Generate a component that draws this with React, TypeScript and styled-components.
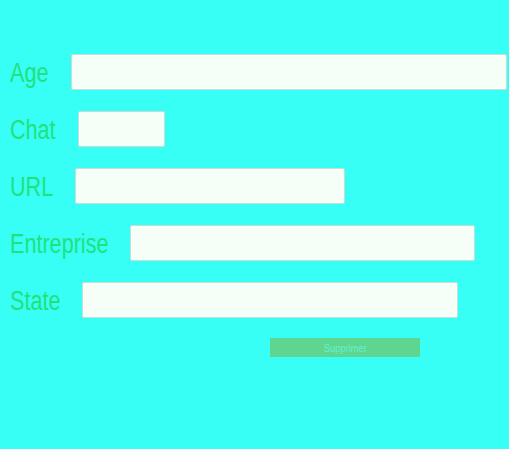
import React from "react";
import styled, { createGlobalStyle } from "styled-components";

const Global = createGlobalStyle`
  html, body {
    margin: 0;
    padding: 0;
    background: #38fff6;
  }
  body {
    font-family: "Liberation Sans", Arial, sans-serif;
  }
`;

const Page = styled.div`
  min-height: 449px;
  background: #38fff6;
  padding: 54px 0 0 10px;
  box-sizing: border-box;
`;

const Form = styled.form`
  display: flex;
  flex-direction: column;
  gap: 21px;
`;

const Row = styled.div`
  display: flex;
  align-items: center;
  gap: 22px;
  height: 36px;
`;

const Label = styled.label<{ $w: number }>`
  display: block;
  width: ${(p) => p.$w}px;
  flex: none;
  white-space: nowrap;
  font-family: "Liberation Sans", Arial, sans-serif;
  font-size: 27px;
  color: #20e27a;
  line-height: 36px;
  padding-top: 2px;
`;

const Narrow = styled.span`
  display: inline-block;
  transform: scaleX(0.8);
  transform-origin: left center;
`;

const Input = styled.input<{ $w: number }>`
  width: ${(p) => p.$w}px;
  height: 36px;
  flex: none;
  box-sizing: border-box;
  border: 1px solid #c6dcd8;
  border-radius: 2px;
  background: #f5fff7;
  outline: none;
  padding: 0 6px;
  font-family: "Liberation Sans", Arial, sans-serif;
`;

const ButtonRow = styled.div`
  display: flex;
  padding-left: 260px;
  margin-top: -1px;
`;

const Button = styled.button`
  width: 150px;
  height: 19px;
  border: none;
  background: #5ed690;
  color: #62f0d4;
  font-family: "Liberation Sans", Arial, sans-serif;
  font-size: 11px;
  padding: 0;
  cursor: pointer;
`;

const ButtonText = styled.span`
  display: inline-block;
  transform: scaleX(0.85);
`;

const fields = [
  { label: "Age", lw: 39, w: 436 },
  { label: "Chat", lw: 46, w: 87 },
  { label: "URL", lw: 43, w: 270 },
  { label: "Entreprise", lw: 98, w: 345 },
  { label: "State", lw: 50, w: 376 },
];

export default function App() {
  return (
    <Page>
      <Global />
      <Form onSubmit={(e) => e.preventDefault()}>
        {fields.map((f) => (
          <Row key={f.label}>
            <Label $w={f.lw}>
              <Narrow>{f.label}</Narrow>
            </Label>
            <Input $w={f.w} />
          </Row>
        ))}
        <ButtonRow>
          <Button type="button">
            <ButtonText>Supprimer</ButtonText>
          </Button>
        </ButtonRow>
      </Form>
    </Page>
  );
}
